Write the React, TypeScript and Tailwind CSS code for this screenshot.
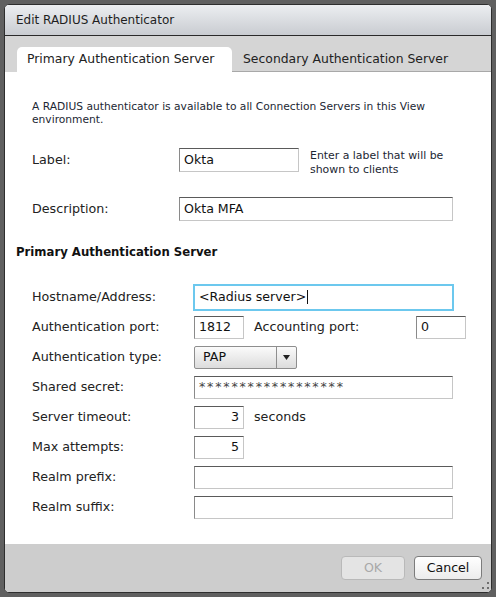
import React from 'react';

const box =
  'h-[23px] bg-white border border-t-[#5a5a5a] border-l-[#8a8a8a] border-r-[#c6c6c6] border-b-[#c6c6c6] px-[4px] flex items-center text-[12.6px] text-[#111] leading-none';

const FormRow: React.FC<{ label: string; children: React.ReactNode }> = ({ label, children }) => (
  <div className="flex items-center h-[30px]">
    <div className="w-[162px] shrink-0 text-[12.7px] text-[#222]">{label}</div>
    {children}
  </div>
);

export default function App() {
  return (
    <div className="w-[496px] h-[597px] bg-[#606060] pt-[4px] pl-[4px] font-['DejaVu_Sans',sans-serif]">
      <div className="w-[488px] h-[589px] border border-[#2e2e2e] rounded-[5px] overflow-hidden flex flex-col bg-white">
        {/* title bar */}
        <div className="h-[31px] shrink-0 bg-gradient-to-b from-[#eceef1] to-[#c9ccd1] border-b border-[#2a2a2a] flex items-center pl-[11px] text-[12px] text-[#1e1e1e]">
          Edit RADIUS Authenticator
        </div>

        {/* tabs */}
        <div className="h-[36px] shrink-0 bg-[#d5d5d5] flex items-end pl-[12px]">
          <div className="w-[215px] h-[25px] bg-white rounded-t-[5px] flex items-center pl-[10px] text-[12.4px] text-[#222]">
            Primary Authentication Server
          </div>
          <div className="flex-1 h-[25px] border-b border-[#a8a8a8] flex items-center pl-[11px] text-[12.4px] text-[#222]">
            Secondary Authentication Server
          </div>
        </div>

        {/* body */}
        <div className="flex-1 flex flex-col">
          <p className="mt-[28px] ml-[27px] w-[440px] text-[10.7px] leading-[13px] text-[#1c2733]">
            A RADIUS authenticator is available to all Connection Servers in this View environment.
          </p>

          <div className="mt-[22px] ml-[27px] h-[24px] flex items-start">
            <div className="w-[147px] h-[24px] leading-[24px] text-[12.7px] text-[#222]">Label:</div>
            <div className={`${box} w-[120px] h-[24px]`}>Okta</div>
            <div className="ml-[11px] mt-[1px] w-[150px] text-[10.9px] leading-[14px] text-[#1c2733]">
              Enter a label that will be shown to clients
            </div>
          </div>

          <div className="mt-[25px] ml-[27px] flex items-center">
            <div className="w-[147px] text-[12.7px] text-[#222]">Description:</div>
            <div className={`${box} w-[274px] h-[24px]`}>Okta MFA</div>
          </div>

          <div className="mt-[24px] ml-[11px] text-[11.7px] leading-[15px] font-bold text-[#111]">
            Primary Authentication Server
          </div>

          <div className="mt-[22px] ml-[27px] flex flex-col">
            <FormRow label="Hostname/Address:">
              <div className="-ml-[1px] w-[261px] h-[27px] border-2 border-[#6cc8ee] bg-white px-[4px] flex items-center text-[12.6px] text-[#111]">
                &lt;Radius server&gt;<span className="ml-[1px] w-px h-[14px] bg-[#111]" />
              </div>
            </FormRow>
            <FormRow label="Authentication port:">
              <div className={`${box} w-[50px]`}>1812</div>
              <div className="ml-[10px] w-[162px] text-[12.7px] text-[#222]">Accounting port:</div>
              <div className={`${box} w-[50px]`}>0</div>
            </FormRow>
            <FormRow label="Authentication type:">
              <div className="w-[103px] h-[23px] border border-[#8e8e8e] rounded-[2px] bg-gradient-to-b from-[#fbfbfb] to-[#dcdcdc] flex items-stretch">
                <div className="flex-1 flex items-center pl-[8px] text-[12.6px] text-[#111]">PAP</div>
                <div className="w-[20px] border-l border-[#8e8e8e] flex items-center justify-center">
                  <svg width="7" height="5" viewBox="0 0 7 5">
                    <path d="M0 0h7L3.5 5z" fill="#222" />
                  </svg>
                </div>
              </div>
            </FormRow>
            <FormRow label="Shared secret:">
              <div className={`${box} w-[259px] text-[9px] tracking-[1.8px] text-[#444]`}>******************</div>
            </FormRow>
            <FormRow label="Server timeout:">
              <div className={`${box} w-[50px] justify-end`}>3</div>
              <div className="ml-[10px] text-[12.7px] text-[#222]">seconds</div>
            </FormRow>
            <FormRow label="Max attempts:">
              <div className={`${box} w-[50px] justify-end`}>5</div>
            </FormRow>
            <FormRow label="Realm prefix:">
              <div className={`${box} w-[259px]`} />
            </FormRow>
            <FormRow label="Realm suffix:">
              <div className={`${box} w-[259px]`} />
            </FormRow>
          </div>
        </div>

        {/* footer */}
        <div className="relative h-[48px] shrink-0 bg-[#cdcdcd] flex justify-end items-start pt-[12px] pr-[9px] gap-[9px]">
          <button className="w-[64px] h-[24px] rounded-[4px] border border-[#b9b9b9] bg-[#e4e4e4] text-[12.6px] text-[#a9a9a9]">
            OK
          </button>
          <button className="w-[68px] h-[24px] rounded-[4px] border border-[#7c7c7c] bg-gradient-to-b from-[#ffffff] to-[#ececec] text-[12.6px] text-[#111]">
            Cancel
          </button>
          <svg className="absolute right-[1px] bottom-[1px]" width="10" height="10" viewBox="0 0 10 10">
            <rect x="7" y="1" width="2" height="2" fill="#6e6e6e" />
            <rect x="7" y="6" width="2" height="2" fill="#6e6e6e" />
            <rect x="2" y="6" width="2" height="2" fill="#6e6e6e" />
          </svg>
        </div>
      </div>
    </div>
  );
}
